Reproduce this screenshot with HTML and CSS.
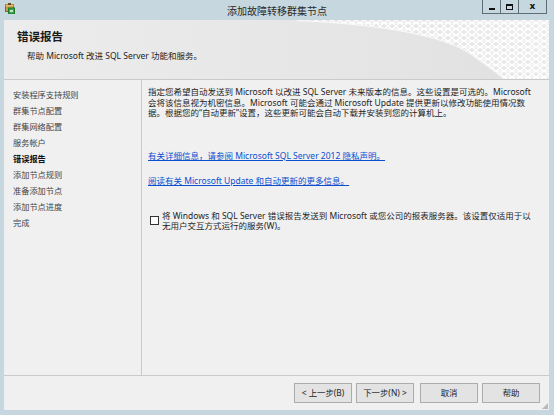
FILE: index.html
```html
<!DOCTYPE html>
<html lang="zh-CN">
<head>
<meta charset="utf-8">
<title>添加故障转移群集节点</title>
<link rel="stylesheet" href="styles.css">
</head>
<body>
<div class="window">
  <div class="titlebar">
    <div class="tb-left">
      <svg class="app-icon" width="10" height="11" viewBox="0 0 10 11">
        <rect x="0.5" y="1.5" width="8" height="7" fill="#c89a4a" stroke="#8a6420" stroke-width="1"/>
        <rect x="0.5" y="1.5" width="8" height="2" fill="#e2bb6a"/>
        <rect x="3" y="0" width="3" height="2" fill="#6b4a1a"/>
        <rect x="3.5" y="5" width="6" height="6" fill="#3aa04a" stroke="#1f7a2e" stroke-width="1"/>
        <rect x="5" y="7" width="3" height="2" fill="#bfe9c4"/>
      </svg>
    </div>
    <div class="tb-title">添加故障转移群集节点</div>
    <div class="tb-controls">
      <div class="tb-btn tb-min"><span class="g-min"></span></div>
      <div class="tb-btn tb-max"><span class="g-max"></span></div>
      <div class="tb-btn tb-close"><span class="g-close">x</span></div>
    </div>
  </div>
  <div class="client">
    <div class="header">
      <svg class="mesh" width="545" height="59" viewBox="0 0 545 59">
        <defs>
          <pattern id="tri" width="8" height="6" patternUnits="userSpaceOnUse">
            <path d="M0 0 L8 6 M8 0 L0 6 M0 3 L8 3" stroke="#ffffff" stroke-width="1.1" fill="none"/>
          </pattern>
          <clipPath id="meshclip">
            <path d="M293 0 C 380 4, 445 16, 470 36 C 484 46, 494 53, 500 59 L 545 59 L 545 0 Z"/>
          </clipPath>
          <linearGradient id="fade" x1="0" y1="0" x2="1" y2="0">
            <stop offset="0" stop-color="#e8e8e8" stop-opacity="0"/>
            <stop offset="1" stop-color="#f2f2f2" stop-opacity="0.6"/>
          </linearGradient>
        </defs>
        <g clip-path="url(#meshclip)">
          <rect x="290" y="0" width="255" height="59" fill="url(#fade)"/>
          <rect x="290" y="0" width="255" height="59" fill="url(#tri)"/>
        </g>
        <path d="M293 0.5 C 380 4.5, 445 16.5, 470 36.5 C 484 46.5, 494 53.5, 500 59.5" stroke="#ffffff" stroke-width="1" fill="none" opacity="0.8"/>
      </svg>
      <div class="h-title">错误报告</div>
      <div class="h-sub">帮助 Microsoft 改进 SQL Server 功能和服务。</div>
    </div>
    <div class="main">
      <ul class="nav">
        <li>安装程序支持规则</li>
        <li>群集节点配置</li>
        <li>群集网络配置</li>
        <li>服务帐户</li>
        <li class="current">错误报告</li>
        <li>添加节点规则</li>
        <li>准备添加节点</li>
        <li>添加节点进度</li>
        <li>完成</li>
      </ul>
      <div class="content">
        <p class="desc">指定您希望自动发送到 Microsoft 以改进 SQL Server 未来版本的信息。这些设置是可选的。Microsoft<br>会将该信息视为机密信息。Microsoft 可能会通过 Microsoft Update 提供更新以修改功能使用情况数<br>据。根据您的“自动更新”设置，这些更新可能会自动下载并安装到您的计算机上。</p>
        <a class="link link1" href="#">有关详细信息，请参阅 Microsoft SQL Server 2012 隐私声明。</a>
        <a class="link link2" href="#">阅读有关 Microsoft Update 和自动更新的更多信息。</a>
        <label class="check">
          <span class="box"></span>
          <span class="check-text">将 Windows 和 SQL Server 错误报告发送到 Microsoft 或您公司的报表服务器。该设置仅适用于以<br>无用户交互方式运行的服务(W)。</span>
        </label>
      </div>
    </div>
    <div class="footer">
      <button class="btn">&lt; 上一步(B)</button>
      <button class="btn">下一步(N) &gt;</button>
      <button class="btn btn-gap">取消</button>
      <button class="btn">帮助</button>
      <span class="grip"></span>
    </div>
  </div>
</div>
</body>
</html>
```

FILE: styles.css
```css
* { box-sizing: border-box; }
html, body {
  margin: 0;
  padding: 0;
}
body {
  width: 554px;
  height: 415px;
  background: #c6d7df;
  font-family: "Noto Sans", "Noto Sans CJK SC", sans-serif;
  color: #1e1e1e;
  overflow: hidden;
}
.window {
  width: 554px;
  height: 415px;
  display: flex;
  flex-direction: column;
}
.titlebar {
  height: 20px;
  display: grid;
  grid-template-columns: 1fr auto 1fr;
  align-items: start;
}
.tb-left {
  padding: 3px 0 0 5px;
}
.app-icon { display: block; }
.tb-title {
  font-family: "Noto Sans CJK SC", sans-serif;
  font-size: 10px;
  line-height: 12px;
  padding-top: 5px;
  color: #2a2a2a;
}
.tb-controls {
  display: flex;
  justify-content: flex-end;
  padding-right: 7px;
}
.tb-btn {
  height: 14px;
  border: 1px solid #5f6e75;
  border-top: none;
  display: flex;
  align-items: center;
  justify-content: center;
  background: #c6d7df;
}
.tb-min { width: 19px; }
.tb-max { width: 18px; border-left: none; }
.tb-close { width: 28px; border-left: none; }
.g-min {
  width: 6px;
  height: 2px;
  background: #111;
  margin-top: 5px;
}
.g-max {
  width: 7px;
  height: 6px;
  border: 1px solid #111;
  border-top-width: 2px;
}
.g-close {
  font-family: "DejaVu Sans", sans-serif;
  font-weight: bold;
  font-size: 9px;
  line-height: 9px;
  color: #111;
  margin-top: -1px;
}
.client {
  flex: 1;
  margin: 0 5px 5px 4px;
  background: #f0f0f0;
  display: flex;
  flex-direction: column;
}
.header {
  position: relative;
  height: 60px;
  border-bottom: 1px solid #cacaca;
  background: linear-gradient(to right, #ececec 0%, #e6e6e6 60%, #e0e0e0 100%);
  padding: 9px 0 0 13px;
}
.mesh {
  position: absolute;
  left: 0;
  top: 0;
}
.h-title {
  position: relative;
  font-family: "Noto Sans CJK SC", sans-serif;
  font-weight: bold;
  font-size: 11.5px;
  line-height: 15px;
  color: #1a1a1a;
}
.h-sub {
  position: relative;
  margin: 6px 0 0 10px;
  font-size: 8.5px;
  line-height: 12px;
  color: #222;
}
.main {
  flex: 1;
  display: flex;
  border-bottom: 1px solid #cacaca;
}
.nav {
  width: 138px;
  margin: 0;
  padding: 6px 0 0 9px;
  list-style: none;
  border-right: 1px solid #cacaca;
  font-family: "Noto Sans CJK SC", sans-serif;
  font-size: 8.2px;
  line-height: 16px;
  color: #444;
}
.nav li { height: 16px; white-space: nowrap; }
.nav .current { font-weight: bold; color: #111; }
.content {
  flex: 1;
  padding: 7px 0 0 6px;
  font-size: 8.5px;
  line-height: 10.6px;
  color: #1e1e1e;
  white-space: nowrap;
}
.desc {
  margin: 0;
}
.link {
  display: block;
  color: #0b4fd0;
  text-decoration: underline;
  width: max-content;
}
.link1 { margin-top: 32px; }
.link2 { margin-top: 15px; }
.check {
  display: flex;
  align-items: flex-start;
  gap: 3px;
  margin-top: 24px;
  padding-left: 2px;
}
.box {
  flex: none;
  width: 9px;
  height: 9px;
  margin-top: 5px;
  border: 1px solid #333;
  background: #fff;
}
.check-text { flex: 1; line-height: 10.4px; }
.footer {
  position: relative;
  height: 34px;
  display: flex;
  justify-content: flex-end;
  align-items: flex-start;
  padding: 7px 9px 0 0;
  gap: 4px;
}
.btn {
  width: 58px;
  height: 20px;
  margin: 0;
  padding: 0;
  border: 1px solid #acacac;
  background: #e3e3e3;
  font-family: "Noto Sans", "Noto Sans CJK SC", sans-serif;
  font-size: 8.4px;
  line-height: 18px;
  color: #222;
}
.btn-gap { margin-left: 2px; }
.grip {
  position: absolute;
  right: 1px;
  bottom: 1px;
  width: 6px;
  height: 6px;
  background:
    radial-gradient(circle, #b8b8b8 0.7px, transparent 0.9px) 0 0 / 2px 2px;
  clip-path: polygon(100% 0, 100% 100%, 0 100%);
}
```
